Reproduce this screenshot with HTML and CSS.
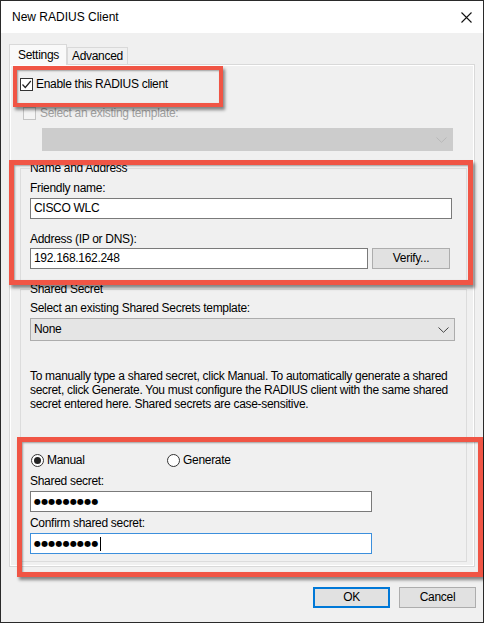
FILE: index.html
```html
<!DOCTYPE html>
<html lang="en">
<head>
    <meta charset="UTF-8">
    <title>New RADIUS Client</title>
    <link rel="stylesheet" href="styles.css">
</head>
<body>
    <div class="window">
        <div class="titlebar">
            <span class="title">New RADIUS Client</span>
            <svg class="close" width="11" height="11" viewBox="0 0 11 11">
                <path d="M0.5 0.5 L10.5 10.5 M10.5 0.5 L0.5 10.5" stroke="#111" stroke-width="1.1" fill="none"/>
            </svg>
        </div>

        <div class="content">
            <div class="tabs">
                <div class="tab active">Settings</div>
                <div class="tab">Advanced</div>
            </div>

            <div class="page">
                <div class="check-row enable">
                    <span class="box">
                        <svg width="11" height="11" viewBox="0 0 11 11">
                            <path d="M1.5 5.5 L4.3 8.5 L9.8 2" stroke="#222" stroke-width="1.2" fill="none"/>
                        </svg>
                    </span>
                    Enable this RADIUS client
                </div>

                <div class="check-row template">
                    <span class="box disabled"></span>
                    Select an existing template:
                </div>
                <div class="combo combo-disabled">
                    <svg class="chevron" width="11" height="6" viewBox="0 0 11 6">
                        <path d="M0.5 0.5 L5.5 5.3 L10.5 0.5" stroke="#b8b8b8" stroke-width="1" fill="none"/>
                    </svg>
                </div>

                <!-- Name and Address -->
                <fieldset class="group name-group">
                    <legend>Name and Address</legend>
                    <div class="field-label first">Friendly name:</div>
                    <div class="textbox friendly">CISCO WLC</div>
                    <div class="field-label address-label">Address (IP or DNS):</div>
                    <div class="address-row">
                        <div class="textbox address">192.168.162.248</div>
                        <div class="button verify">Verify...</div>
                    </div>
                </fieldset>

                <!-- Shared Secret -->
                <fieldset class="group secret-group">
                    <legend>Shared Secret</legend>
                    <div class="field-label template-label">Select an existing Shared Secrets template:</div>
                    <div class="combo combo-none">
                        None
                        <svg class="chevron" width="11" height="6" viewBox="0 0 11 6">
                            <path d="M0.5 0.5 L5.5 5.3 L10.5 0.5" stroke="#444" stroke-width="1" fill="none"/>
                        </svg>
                    </div>
                    <p class="hint">To manually type a shared secret, click Manual. To automatically generate a shared<br>secret, click Generate. You must configure the RADIUS client with the same shared<br>secret entered here. Shared secrets are case-sensitive.</p>
                    <div class="radio-row">
                        <span class="radio-item manual"><span class="radio on"></span>Manual</span>
                        <span class="radio-item generate"><span class="radio"></span>Generate</span>
                    </div>
                    <div class="field-label secret-label">Shared secret:</div>
                    <div class="textbox secret"><span class="dots">●●●●●●●●●</span></div>
                    <div class="field-label confirm-label">Confirm shared secret:</div>
                    <div class="textbox secret focused"><span class="dots">●●●●●●●●●</span><span class="caret"></span></div>
                </fieldset>
            </div>

            <div class="footer">
                <div class="button default">OK</div>
                <div class="button">Cancel</div>
            </div>
        </div>

        <!-- highlight marks -->
        <div class="mark mark-enable"></div>
        <div class="mark mark-name"></div>
        <div class="mark mark-secret"></div>
    </div>
</body>
</html>
```

FILE: styles.css
```css
body {
    margin: 0;
    background-color: white;
    font-family: "Liberation Sans", Arial, sans-serif;
    font-size: 12px;
    letter-spacing: -0.3px;
    color: black;
}

.window {
    position: relative;
    width: 484px;
    height: 623px;
    box-sizing: border-box;
    border: 1px solid #2a2a2a;
    background-color: #f0f0f0;
}

.titlebar {
    height: 32px;
    background-color: white;
    display: flex;
    align-items: center;
    justify-content: space-between;
    padding: 0 11px 0 11px;
}

.title {
    font-size: 12px;
    letter-spacing: 0;
}

.close {
    display: block;
}

.content {
    padding: 0 8px;
}

.tabs {
    display: flex;
    align-items: flex-end;
    height: 20px;
    margin-top: 11px;
}

.tab {
    height: 17px;
    line-height: 16px;
    padding: 0 4px;
    border: 1px solid #d9d9d9;
    border-bottom: none;
    box-sizing: border-box;
    background-color: #f0f0f0;
}

.tab.active {
    height: 21px;
    margin-bottom: -1px;
    padding: 0 7px 0 8px;
    line-height: 20px;
    background-color: #f9f9f9;
    position: relative;
    z-index: 1;
}

.page {
    height: 503px;
    box-sizing: border-box;
    border: 1px solid #d9d9d9;
    box-shadow: inset 0 0 0 1px #ffffff;
    overflow: hidden;
}

.check-row {
    display: flex;
    align-items: center;
    height: 14px;
    line-height: 14px;
}

.check-row.enable {
    margin: 12px 0 0 10px;
    gap: 3px;
}

.check-row.template {
    margin: 15px 0 0 13px;
    gap: 4px;
    color: #a0a0a0;
}

.box {
    width: 13px;
    height: 13px;
    box-sizing: border-box;
    border: 1px solid #333;
    background-color: white;
    display: flex;
    align-items: center;
    justify-content: center;
}

.box.disabled {
    border-color: #c4c4c4;
    background-color: #f4f4f4;
}

.combo {
    position: relative;
    height: 23px;
    box-sizing: border-box;
    line-height: 21px;
    padding-left: 3px;
}

.combo .chevron {
    position: absolute;
    right: 5px;
    top: 8px;
}

.combo-disabled {
    width: 411px;
    margin: 8px 0 0 32px;
    background-color: #cccccc;
    border: 1px solid #cccccc;
}

.combo-none {
    width: 425px;
    margin-top: 3px;
    background-color: #e5e5e5;
    border: 1px solid #acacac;
}

.group {
    margin: 0 7px 0 10px;
    padding: 0 9px;
    border: 1px solid #dcdcdc;
    min-width: 0;
}

.group legend {
    padding: 0;
    line-height: 14px;
}

.name-group {
    margin-top: 10px;
    padding-bottom: 11px;
}

.secret-group {
    margin-top: 1px;
    padding-bottom: 7px;
}

.field-label {
    line-height: 14px;
}

.field-label.first {
    margin-top: 6px;
}

.field-label.address-label {
    margin-top: 13px;
}

.field-label.template-label {
    margin-top: 5px;
}

.field-label.secret-label {
    margin-top: 7px;
}

.field-label.confirm-label {
    margin-top: 4px;
}

.textbox {
    height: 21px;
    box-sizing: border-box;
    border: 1px solid #7a7a7a;
    background-color: white;
    line-height: 19px;
    padding-left: 3px;
    margin-top: 3px;
    display: flex;
    align-items: center;
}

.textbox.friendly {
    width: 422px;
}

.address-row {
    display: flex;
    gap: 4px;
    margin-top: 2px;
}

.textbox.address {
    width: 338px;
    margin-top: 0;
}

.button {
    height: 21px;
    box-sizing: border-box;
    border: 1px solid #adadad;
    background-color: #e1e1e1;
    text-align: center;
    line-height: 19px;
}

.verify {
    width: 78px;
}

.hint {
    margin: 28px 0 0 0;
    line-height: 14px;
    white-space: nowrap;
}

.radio-row {
    display: flex;
    height: 14px;
    line-height: 14px;
    margin-top: 42px;
}

.radio-item {
    display: flex;
    align-items: center;
    gap: 3px;
}

.radio-item.manual {
    margin-left: 1px;
    width: 136px;
}

.radio {
    width: 13px;
    height: 13px;
    box-sizing: border-box;
    border: 1px solid #333;
    border-radius: 50%;
    background-color: white;
    position: relative;
}

.radio.on::after {
    content: "";
    position: absolute;
    left: 2px;
    top: 2px;
    width: 7px;
    height: 7px;
    border-radius: 50%;
    background-color: #222;
}

.textbox.secret {
    width: 342px;
}

.dots {
    font-family: "DejaVu Sans", sans-serif;
    font-size: 8px;
    letter-spacing: 0.2px;
}

.textbox.focused {
    border-color: #3c8fdc;
}

.caret {
    display: inline-block;
    width: 1px;
    height: 14px;
    background-color: black;
    margin-left: 1px;
}

.footer {
    display: flex;
    justify-content: flex-end;
    gap: 9px;
    margin: 20px -1px 0 0;
}

.footer .button {
    width: 77px;
}

.button.default {
    border: 2px solid #0078d7;
    line-height: 17px;
}

/* red annotation frames */
.mark {
    position: absolute;
    box-sizing: border-box;
    border: 4px solid #f05545;
    box-shadow: 2px 3px 3px rgba(0, 0, 0, 0.45), inset 1px 1px 2px rgba(0, 0, 0, 0.35);
}

.mark-enable {
    left: 12px;
    top: 65px;
    width: 210px;
    height: 41px;
}

.mark-name {
    left: 8px;
    top: 159px;
    width: 464px;
    height: 125px;
    border-width: 5px;
}

.mark-secret {
    left: 16px;
    top: 436px;
    width: 466px;
    height: 140px;
    border-width: 5px;
}
```
